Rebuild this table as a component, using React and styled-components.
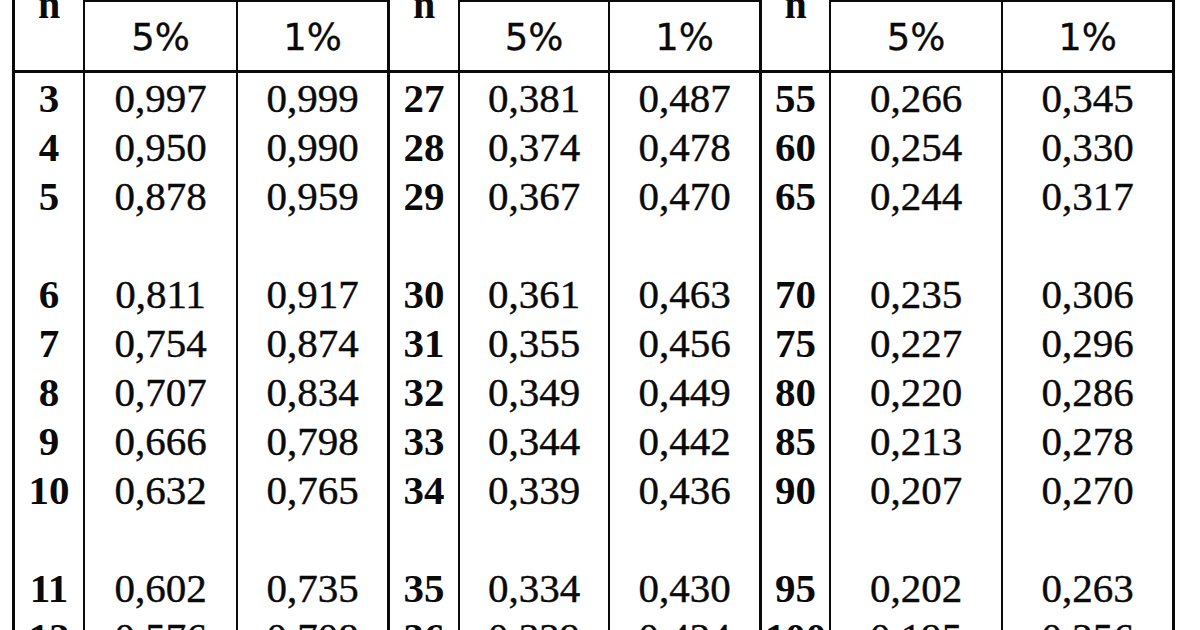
import React from "react";
import styled, { createGlobalStyle } from "styled-components";

const GlobalStyle = createGlobalStyle`
  *, *::before, *::after {
    box-sizing: border-box;
  }
  html, body {
    margin: 0;
    padding: 0;
    background: #ffffff;
    overflow: hidden;
  }
`;

// column widths (border-box, right border included)
const widths = [70, 153, 152, 70, 150, 152, 69, 172, 172];
const kinds = ["n", "p5", "p1", "n", "p5", "p1", "n", "p5", "p1"];

const rows = [
  ["3", "0,997", "0,999", "27", "0,381", "0,487", "55", "0,266", "0,345"],
  ["4", "0,950", "0,990", "28", "0,374", "0,478", "60", "0,254", "0,330"],
  ["5", "0,878", "0,959", "29", "0,367", "0,470", "65", "0,244", "0,317"],
  null,
  ["6", "0,811", "0,917", "30", "0,361", "0,463", "70", "0,235", "0,306"],
  ["7", "0,754", "0,874", "31", "0,355", "0,456", "75", "0,227", "0,296"],
  ["8", "0,707", "0,834", "32", "0,349", "0,449", "80", "0,220", "0,286"],
  ["9", "0,666", "0,798", "33", "0,344", "0,442", "85", "0,213", "0,278"],
  ["10", "0,632", "0,765", "34", "0,339", "0,436", "90", "0,207", "0,270"],
  null,
  ["11", "0,602", "0,735", "35", "0,334", "0,430", "95", "0,202", "0,263"],
  ["12", "0,576", "0,708", "36", "0,329", "0,424", "100", "0,195", "0,256"],
];

export default function App() {
  return (
    <>
      <GlobalStyle />
      <Page>
        <Table>
          <thead>
            <tr>
              {kinds.map((k, i) =>
                k === "n" ? (
                  <NHead key={i} $w={widths[i]}>
                    <NLabel>n</NLabel>
                  </NHead>
                ) : (
                  <PctHead key={i} $w={widths[i]} $kind={k}>
                    {k === "p5" ? "5%" : "1%"}
                  </PctHead>
                )
              )}
            </tr>
          </thead>
          <tbody>
            {rows.map((r, ri) => (
              <Row key={ri}>
                {kinds.map((k, i) => (
                  <Cell key={i} $kind={k}>
                    {r ? r[i] : ""}
                  </Cell>
                ))}
              </Row>
            ))}
          </tbody>
        </Table>
      </Page>
    </>
  );
}

// ─── STYLED COMPONENTS ──────────────────────────────────────────────

const Page = styled.div`
  width: 1200px;
  height: 630px;
  overflow: hidden;
  background: #ffffff;
  padding-left: 12px;
`;

const Table = styled.table`
  border-collapse: separate;
  border-spacing: 0;
  table-layout: fixed;
  width: 1163px;
  border-left: 3px solid #0a0a0a;
  color: #0a0a0a;
`;

const rightBorder = (k) => (k === "p1" ? "3px solid #0a0a0a" : "2px solid #0a0a0a");

const NHead = styled.th`
  width: ${(p) => p.$w}px;
  height: 73px;
  padding: 0;
  vertical-align: top;
  border-right: 2px solid #0a0a0a;
  border-bottom: 3px solid #0a0a0a;
`;

const NLabel = styled.span`
  display: block;
  margin-top: -15px;
  font-family: "Liberation Serif", "Times New Roman", serif;
  font-weight: 700;
  font-size: 40px;
  line-height: 40px;
  text-align: center;
`;

const PctHead = styled.th`
  width: ${(p) => p.$w}px;
  height: 73px;
  padding: 4px 0 0;
  vertical-align: middle;
  text-align: center;
  font-family: "DejaVu Sans", "Liberation Sans", sans-serif;
  font-weight: 400;
  font-size: 37px;
  line-height: 40px;
  -webkit-text-stroke: 0.3px #0a0a0a;
  border-top: 2px solid #0a0a0a;
  border-right: ${(p) => rightBorder(p.$kind)};
  border-bottom: 3px solid #0a0a0a;
`;

const Row = styled.tr`
  height: 49px;
`;

const Cell = styled.td`
  padding: 0;
  height: 49px;
  text-align: center;
  vertical-align: middle;
  font-family: "Liberation Serif", "Times New Roman", serif;
  font-size: 41px;
  line-height: 40px;
  white-space: nowrap;
  font-weight: ${(p) => (p.$kind === "n" ? 700 : 400)};
  -webkit-text-stroke: ${(p) => (p.$kind === "n" ? "0" : "0.4px #0a0a0a")};
  border-right: ${(p) => rightBorder(p.$kind)};
`;
